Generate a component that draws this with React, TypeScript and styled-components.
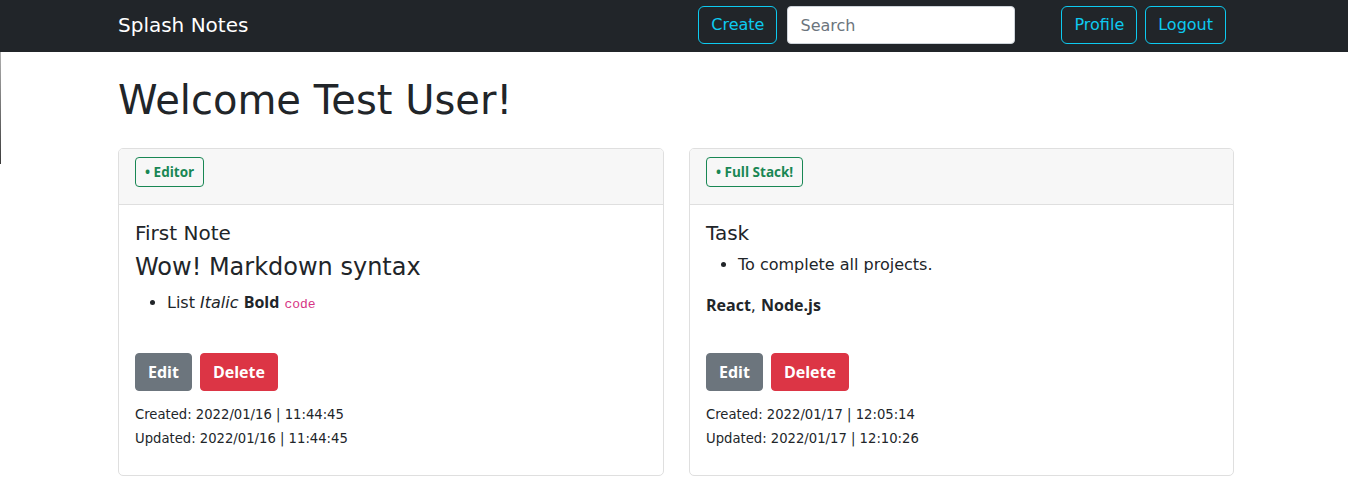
import React from "react";
import styled, { createGlobalStyle } from "styled-components";

const REG = `"DejaVu Sans", "Noto Sans", sans-serif`;
const BOLD = `"Open Sans", "Noto Sans", sans-serif`;

const GlobalStyle = createGlobalStyle`
  * { box-sizing: border-box; }
  html, body { margin: 0; padding: 0; background: #ffffff; }
  body {
    font-family: ${REG};
    font-size: 16px;
    line-height: 1.5;
    color: #212529;
  }
`;

const Page = styled.div`
  position: relative;
  min-height: 490px;
  &::before {
    content: "";
    position: absolute;
    left: 0;
    top: 52px;
    width: 1px;
    height: 112px;
    background: linear-gradient(#b0b0b0, #3a3a3a);
  }
`;

const NavBar = styled.nav`
  background: #212529;
  height: 52px;
  padding: 6px 0 8px;
`;

const Container = styled.div`
  width: 1120px;
  margin: 0 auto;
  padding-left: 4px;
`;

const NavInner = styled(Container)`
  display: flex;
  align-items: center;
  height: 38px;
`;

const Brand = styled.div`
  color: #ffffff;
  font-size: 20px;
  line-height: 30px;
  margin-right: auto;
`;

const NavGroup = styled.div<{ $mr: number; $gap: number }>`
  display: flex;
  align-items: center;
  gap: ${(p) => p.$gap}px;
  margin-right: ${(p) => p.$mr}px;
`;

const OutlineButton = styled.button`
  height: 38px;
  padding: 0 12px;
  border: 1px solid #0dcaf0;
  border-radius: 6px;
  background: transparent;
  color: #0dcaf0;
  font-family: ${REG};
  font-size: 16px;
  line-height: 24px;
`;

const SearchInput = styled.input`
  width: 228px;
  height: 38px;
  padding: 6px 12px;
  border: 1px solid #ced4da;
  border-radius: 4px;
  background: #ffffff;
  font-family: ${REG};
  font-size: 16px;
  color: #212529;
  outline: none;
  &::placeholder { color: #6c757d; }
`;

const Heading = styled.h1`
  margin: 24px 0 24px;
  font-size: 40px;
  font-weight: 400;
  line-height: 48px;
  color: #212529;
`;

const CardGrid = styled.div`
  display: grid;
  grid-template-columns: 546px 545px;
  gap: 25px;
`;

const Card = styled.div`
  border: 1px solid #dfdfdf;
  border-radius: 5px;
  background: #ffffff;
  overflow: hidden;
`;

const CardHeader = styled.div`
  height: 56px;
  padding: 8px 16px 0;
  background: #f7f7f7;
  border-bottom: 1px solid #dfdfdf;
`;

const Badge = styled.span`
  display: inline-flex;
  align-items: center;
  height: 30px;
  padding: 0 9px;
  border: 1px solid #198754;
  border-radius: 4px;
  color: #198754;
  font-family: ${BOLD};
  font-weight: 700;
  font-size: 13.5px;
`;

const CardBody = styled.div`
  padding: 16px 16px 24px;
`;

const Content = styled.div`
  height: 132px;
`;

const Title = styled.h5`
  margin: 0 0 8px;
  font-size: 20px;
  font-weight: 400;
  line-height: 24px;
`;

const SubTitle = styled.h3`
  margin: 0 0 8px;
  font-size: 24px;
  font-weight: 400;
  line-height: 28.8px;
`;

const List = styled.ul`
  margin: 0 0 16px;
  padding-left: 32px;
  line-height: 24px;
`;

const Para = styled.p`
  margin: 0 0 16px;
  line-height: 24px;
`;

const Strong = styled.strong`
  font-family: ${BOLD};
  font-weight: 700;
`;

const Code = styled.code`
  font-family: "Liberation Mono", "DejaVu Sans Mono", monospace;
  font-size: 13px;
  color: #d63384;
`;

const Actions = styled.div`
  display: flex;
  gap: 8px;
`;

const SolidButton = styled.button<{ $variant: "secondary" | "danger" }>`
  height: 38px;
  padding: 0 12px;
  border: 1px solid ${(p) => (p.$variant === "danger" ? "#dc3545" : "#6c757d")};
  background: ${(p) => (p.$variant === "danger" ? "#dc3545" : "#6c757d")};
  border-radius: 4px;
  color: #ffffff;
  font-family: ${BOLD};
  font-weight: 700;
  font-size: 16px;
  line-height: 24px;
`;

const Dates = styled.div`
  margin-top: 12px;
`;

const DateLine = styled.div`
  font-size: 13.2px;
  line-height: 24px;
`;

type Note = {
  tag: string;
  created: string;
  updated: string;
  body: React.ReactNode;
};

const notes: Note[] = [
  {
    tag: "• Editor",
    created: "2022/01/16 | 11:44:45",
    updated: "2022/01/16 | 11:44:45",
    body: (
      <>
        <Title>First Note</Title>
        <SubTitle>Wow! Markdown syntax</SubTitle>
        <List>
          <li>
            List <em>Italic</em> <Strong>Bold</Strong> <Code>code</Code>
          </li>
        </List>
      </>
    ),
  },
  {
    tag: "• Full Stack!",
    created: "2022/01/17 | 12:05:14",
    updated: "2022/01/17 | 12:10:26",
    body: (
      <>
        <Title>Task</Title>
        <List>
          <li>To complete all projects.</li>
        </List>
        <Para>
          <Strong>React</Strong>, <Strong>Node.js</Strong>
        </Para>
      </>
    ),
  },
];

export default function App() {
  return (
    <Page>
      <GlobalStyle />
      <NavBar>
        <NavInner>
          <Brand>Splash Notes</Brand>
          <NavGroup $mr={46} $gap={10}>
            <OutlineButton>Create</OutlineButton>
            <SearchInput placeholder="Search" />
          </NavGroup>
          <NavGroup $mr={8} $gap={8}>
            <OutlineButton>Profile</OutlineButton>
            <OutlineButton>Logout</OutlineButton>
          </NavGroup>
        </NavInner>
      </NavBar>
      <Container>
        <Heading>Welcome Test User!</Heading>
        <CardGrid>
          {notes.map((n) => (
            <Card key={n.tag}>
              <CardHeader>
                <Badge>{n.tag}</Badge>
              </CardHeader>
              <CardBody>
                <Content>{n.body}</Content>
                <Actions>
                  <SolidButton $variant="secondary">Edit</SolidButton>
                  <SolidButton $variant="danger">Delete</SolidButton>
                </Actions>
                <Dates>
                  <DateLine>Created: {n.created}</DateLine>
                  <DateLine>Updated: {n.updated}</DateLine>
                </Dates>
              </CardBody>
            </Card>
          ))}
        </CardGrid>
      </Container>
    </Page>
  );
}
